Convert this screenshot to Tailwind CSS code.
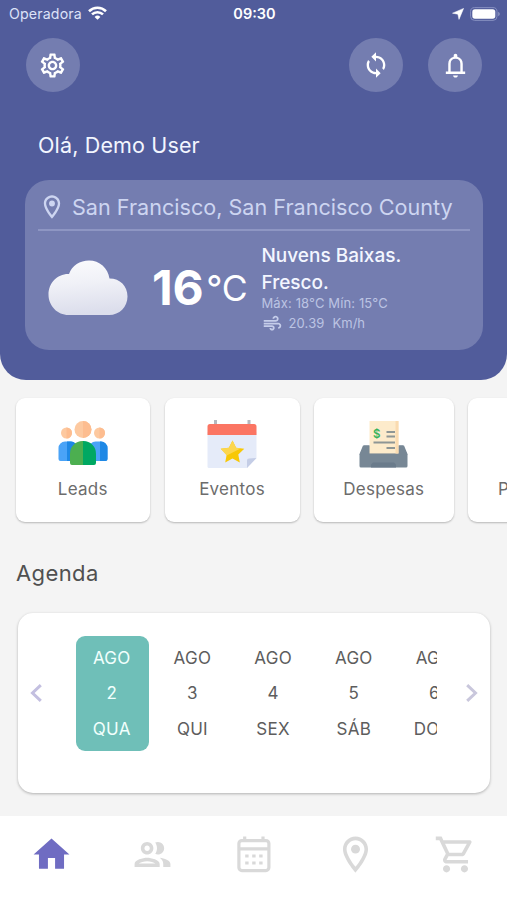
<!DOCTYPE html>
<html lang="pt">
<head>
<meta charset="utf-8">
<title>Agenda</title>
<script src="https://cdn.jsdelivr.net/npm/@tailwindcss/browser@4"></script>
</head>
<body class="w-[507px] h-[900px] overflow-hidden bg-[#f4f4f4] font-['Inter',sans-serif] flex flex-col">
<header class="h-[380px] shrink-0 bg-[#515c9b] rounded-b-[26px] flex flex-col text-white">
  <div class="h-[28px] grid grid-cols-3 items-center pl-[9px] pr-[7px]">
    <div class="flex items-center gap-[6px] text-[14.2px] leading-[28px] text-[#dde2f8]"><span class="tracking-[0.15px]">Operadora</span>
      <svg class="w-[19px] h-[14px] -mt-[2px]" viewBox="0 0 19 14" fill="none" stroke="#fff" stroke-width="2.6"><path d="M1 5.2a12.2 12.2 0 0 1 17 0M4 8.4a8 8 0 0 1 11 0"/><path d="M9.5 13.8 6.6 10.9a4.2 4.2 0 0 1 5.8 0z" fill="#fff" stroke="none"/></svg></div>
    <div class="text-center text-[14.5px] leading-[28px] font-semibold">09:30</div>
    <div class="flex items-center justify-end gap-[6px]">
      <svg class="w-[12px] h-[12px]" viewBox="0 0 12 12" fill="#fff"><path d="M11.6.4 7 11.4 5.9 6.2.5 5.2z" stroke="#fff" stroke-width=".5" stroke-linejoin="round"/></svg>
      <svg class="w-[30px] h-[14px]" viewBox="0 0 30 14"><rect x=".6" y=".6" width="26.4" height="12.8" rx="4" fill="none" stroke="#868fc0"/><rect x="2.3" y="2.3" width="23" height="9.4" rx="2.6" fill="#fff"/><path d="M28.4 4.8c1.6.8 1.6 3.600 0 4.400z" fill="#a0a7cd"/></svg>
    </div>
  </div>
  <div class="mt-[10px] h-[54px] pl-[25.500px] pr-[25px] flex items-center">
    <div class="size-[54px] rounded-full bg-[#747db0] flex items-center justify-center"><svg class="size-[29px]" viewBox="0 0 24 24" fill="#fff"><path d="M19.43 12.98c.04-.32.07-.64.07-.98 0-.34-.03-.66-.07-.98l2.11-1.65c.19-.15.24-.42.12-.64l-2-3.46c-.09-.16-.26-.25-.44-.25-.06 0-.12.01-.17.03l-2.49 1c-.52-.4-1.08-.73-1.69-.98l-.38-2.65C14.46 2.18 14.25 2 14 2h-4c-.25 0-.46.18-.49.42l-.38 2.65c-.61.25-1.17.59-1.69.98l-2.49-1c-.06-.02-.12-.03-.18-.03-.17 0-.34.09-.43.25l-2 3.46c-.13.22-.07.49.12.64l2.11 1.65c-.04.32-.07.65-.07.98 0 .33.03.66.07.98l-2.11 1.65c-.19.15-.24.42-.12.64l2 3.46c.09.16.26.25.44.25.06 0 .12-.01.17-.03l2.49-1c.52.4 1.08.73 1.69.98l.38 2.65c.03.24.24.42.49.42h4c.25 0 .46-.18.49-.42l.38-2.65c.61-.25 1.17-.59 1.69-.98l2.49 1c.06.02.12.03.18.03.17 0 .34-.09.43-.25l2-3.46c.12-.22.07-.49-.12-.64l-2.11-1.65zm-1.98-1.71c.04.31.05.52.05.73 0 .21-.02.43-.05.73l-.14 1.13.89.7 1.08.84-.7 1.21-1.27-.51-1.04-.42-.9.68c-.43.32-.84.56-1.25.73l-1.06.43-.16 1.13-.2 1.35h-1.4l-.19-1.35-.16-1.13-1.06-.43c-.43-.18-.83-.41-1.23-.71l-.91-.7-1.06.43-1.27.51-.7-1.21 1.08-.84.89-.7-.14-1.13c-.03-.31-.05-.54-.05-.74s.02-.43.05-.73l.14-1.13-.89-.7-1.08-.84.7-1.21 1.27.51 1.04.42.9-.68c.43-.32.84-.56 1.25-.73l1.06-.43.16-1.13.2-1.35h1.39l.19 1.35.16 1.13 1.06.43c.43.18.83.41 1.23.71l.91.7 1.06-.43 1.27-.51.7 1.21-1.07.85-.89.7.14 1.13zM12 8c-2.21 0-4 1.79-4 4s1.79 4 4 4 4-1.79 4-4-1.79-4-4-4zm0 6c-1.1 0-2-.9-2-2s.9-2 2-2 2 .9 2 2-.9 2-2 2z"/></svg></div>
    <div class="ml-auto size-[54px] rounded-full bg-[#747db0] flex items-center justify-center"><svg class="size-[28px]" viewBox="0 0 24 24" fill="#fff"><path d="M12 4V1L8 5l4 4V6c3.31 0 6 2.69 6 6 0 1.01-.25 1.97-.7 2.8l1.46 1.46C19.54 15.03 20 13.57 20 12c0-4.42-3.58-8-8-8zm0 14c-3.31 0-6-2.69-6-6 0-1.01.25-1.97.7-2.8L5.24 7.74C4.46 8.97 4 10.43 4 12c0 4.42 3.58 8 8 8v3l4-4-4-4v3z"/></svg></div>
    <div class="ml-[25px] size-[54px] rounded-full bg-[#747db0] flex items-center justify-center"><svg class="size-[29px]" viewBox="0 0 24 24" fill="#fff"><path d="M12 22c1.1 0 2-.7 2-1.700h-4c0 1 .9 1.700 2 1.700zM18 17v-6.500c0-3.070-1.630-5.140-4.500-5.820V3.800c0-.83-.67-1.500-1.500-1.500s-1.500.67-1.500 1.500v.88C7.640 5.360 6 7.420 6 10.500V17H4v2h16v-2zM16 17H8v-6.500c0-2.480 1.510-4 4-4s4 1.520 4 4z"/></svg></div>
  </div>
  <div class="mt-[38px] h-[30px] pl-[38px] text-[21.5px] leading-[30px] tracking-[0.15px] text-[#f3f6ff] whitespace-nowrap">Olá, Demo User</div>
  <section class="mt-[20px] ml-[25px] w-[457.500px] h-[170px] rounded-[24px] bg-[#747db0] px-[12.500px] flex flex-col">
    <div class="h-[51px] border-b-2 border-[#8e96c3] flex items-center pt-[5px] text-[#cdd5f1]">
      <svg class="size-[28px] -mt-[1px]" viewBox="0 0 24 24" fill="#cdd5f1"><path d="M12 2C8.13 2 5 5.13 5 9c0 5.25 7 13 7 13s7-7.75 7-13c0-3.87-3.13-7-7-7zM7 9c0-2.76 2.24-5 5-5s5 2.24 5 5c0 2.880-2.880 7.190-5 9.880C9.920 16.210 7 11.850 7 9z"/><circle cx="12" cy="9" r="2.500"/></svg>
      <span class="ml-[6.500px] text-[21.6px] leading-[30px] whitespace-nowrap">San Francisco, San Francisco County</span>
    </div>
    <div class="h-[119px] flex">
      <svg class="w-[80px] h-[56px] mt-[28.500px] ml-[10px] shrink-0" viewBox="0 0 80 56"><defs><linearGradient id="cl" x1="0" y1="0" x2="0.12" y2="1"><stop offset="0" stop-color="#fbfbfd"/><stop offset=".45" stop-color="#f0f1f7"/><stop offset="1" stop-color="#dcdeec"/></linearGradient></defs><path d="M20.500 55C9.500 55 .500 46 .500 34.500 .500 23 9.500 13.500 21 14 24 5.500 32 .500 41 .500 51.500 .500 60 8 61.500 18.500 72 18.500 79.500 26 79.500 36.500 79.500 47 71.500 55 61 55z" fill="url(#cl)"/></svg>
      <div class="ml-[24.500px] mt-[27px] w-[109.500px] h-[60px] flex items-baseline leading-[60px] whitespace-nowrap"><span class="text-[48px] font-bold tracking-[-0.3px]">16</span><span class="text-[35.500px] relative -top-[4px] ml-[3px] tracking-[-0.300px]">°C</span></div>
      <div class="mt-[11px] flex flex-col text-[#c5cdea] whitespace-nowrap">
        <div class="text-[19px] leading-[27px] font-medium text-[#f3f6ff]">Nuvens Baixas.<br>Fresco.</div>
        <div class="-mt-[1px] text-[13px] leading-[16px] tracking-[0.120px] text-[#bcc4e3]">Máx: 18°C Mín: 15°C</div>
        <div class="mt-[2px] h-[21px] flex items-center text-[13px] text-[#bcc4e3]"><svg class="size-[21px]" viewBox="0 0 24 24" fill="#c5cdea"><path d="M14.5 17c0 1.65-1.35 3-3 3s-3-1.35-3-3h2c0 .55.45 1 1 1s1-.45 1-1-.45-1-1-1H2v-2h9.500c1.650 0 3 1.350 3 3zM19 6.500C19 4.570 17.430 3 15.500 3S12 4.570 12 6.500h2c0-.83.67-1.500 1.500-1.500s1.500.67 1.500 1.500S16.330 8 15.500 8H2v2h13.500c1.930 0 3.500-1.570 3.500-3.500zm-.5 4.500H2v2h16.500c.83 0 1.500.67 1.500 1.500s-.67 1.500-1.500 1.500v2c1.930 0 3.500-1.570 3.500-3.500S20.430 11 18.500 11z"/></svg><span class="ml-[6px] tracking-[0.150px]">20.39</span><span class="ml-[8px]">Km/h</span></div>
      </div>
    </div>
  </section>
</header>
<nav class="w-[507px] h-[134px] overflow-hidden mt-[12px] pt-[6px] pl-[15.500px] flex shrink-0 gap-[14.500px] text-[17px] leading-[24px] tracking-[0.250px] text-[#6c6c6c]">
  <a class="w-[134.500px] h-[124px] shrink-0 rounded-[9px] bg-white shadow-[0_1px_2px_rgba(0,0,0,0.25)] flex flex-col items-center">
    <svg class="mt-[23px] w-[50px] h-[46px]" viewBox="0 0 50 46"><circle cx="8.500" cy="12" r="5.500" fill="#fdc9a0"/><circle cx="41.500" cy="12" r="5.500" fill="#fdc9a0"/><path d="M8.500 6.500a5.500 5.500 0 0 1 0 11zM41.500 6.500a5.500 5.500 0 0 1 0 11z" fill="#fdbd90"/><path d="M.500 27a6.500 6.500 0 0 1 6.500-6.500h6A6 6 0 0 1 19 27v13H2.500a2 2 0 0 1-2-2z" fill="#4aa3f7"/><path d="M9 20.500h4A6 6 0 0 1 19 27v13H9z" fill="#1e88e5"/><path d="M31 27a6.500 6.500 0 0 1 6.500-6.500H43a6.500 6.500 0 0 1 6.500 6.500v11a2 2 0 0 1-2 2H31z" fill="#4aa3f7"/><path d="M42 20.500h1a6.500 6.500 0 0 1 6.500 6.500v11a2 2 0 0 1-2 2H42z" fill="#1e88e5"/><circle cx="25" cy="8.500" r="8.500" fill="#fdc9a0"/><path d="M25 0a8.500 8.500 0 0 1 0 17z" fill="#fdbd90"/><path d="M12 33a12.500 12.500 0 0 1 13-13v24H14a2 2 0 0 1-2-2z" fill="#4caf50"/><path d="M25 20a12.500 12.500 0 0 1 13 13v9a2 2 0 0 1-2 2H25z" fill="#00a862"/></svg>
    <span class="mt-[10px]">Leads</span></a>
  <a class="w-[135px] h-[124px] shrink-0 rounded-[9px] bg-white shadow-[0_1px_2px_rgba(0,0,0,0.25)] flex flex-col items-center">
    <svg class="mt-[22px] w-[50px] h-[48px]" viewBox="0 0 50 48"><path d="M8.500 0v8M42 0v8" stroke="#b5b8bf" stroke-width="3"/><path d="M.500 12h49v26L40 48H2a1.500 1.500 0 0 1-1.500-1.500z" fill="#e5ebf9"/><path d="M.500 15V6.500A2.500 2.500 0 0 1 3 4h44a2.500 2.500 0 0 1 2.500 2.500V15z" fill="#fb7563"/><path d="M49.500 38 40 48v-7.500a2 2 0 0 1 2-2z" fill="#c4cde6"/><path d="m25.500 20.500 3.600 7.300 8.200 1-6 5.600 1.500 8.100-7.300-4-7.300 4 1.500-8.100-6-5.600 8.200-1z" fill="#f8c805"/><path d="m25.500 20.500 3.600 7.300 4.400.600-13.800 7L13.700 28.800l8.200-1z" fill="#fcd64e"/></svg>
    <span class="mt-[9px]">Eventos</span></a>
  <a class="w-[139.500px] h-[124px] shrink-0 rounded-[9px] bg-white shadow-[0_1px_2px_rgba(0,0,0,0.25)] flex flex-col items-center">
    <svg class="mt-[22px] w-[49px] h-[48px]" viewBox="0 0 49 48"><path d="M5 25.500h39L48.500 35H.500z" fill="#66798a"/><path d="M.500 34 4 25.500h6.500V34h29v-8.500H45L48.500 34v12a1.500 1.500 0 0 1-1.500 1.500H2A1.500 1.500 0 0 1 .500 46z" fill="#778795"/><path d="M12 47.500v-3l2-2h21l2 2v3z" fill="#6a7b8b"/><path d="M10.500 1h29v32.500h-29z" fill="#fdebcb"/><path d="M36.500 1h3v32.500h-3z" fill="#fadbb0"/><path d="M27.500 12H36M27.500 16.500H36M14.500 22.500H36M27.500 28H36" stroke="#8e9695" stroke-width="1.800"/><text x="14" y="17.500" font-family="Inter" font-size="11.500" font-weight="600" fill="#35b35c" letter-spacing="0">$</text></svg>
    <span class="mt-[9px]">Despesas</span></a>
  <a class="w-[134.500px] h-[124px] shrink-0 rounded-[9px] bg-white shadow-[0_1px_2px_rgba(0,0,0,0.25)] pl-[30px] pt-[79px]">P</a>
</nav>
<h2 class="mt-[32px] ml-[16px] shrink-0 text-[22px] leading-[30px] tracking-[0.400px] text-[#505050]">Agenda</h2>
<section class="mt-[25px] ml-[18px] w-[472px] h-[180px] shrink-0 rounded-[15px] bg-white shadow-[0_1px_3px_rgba(0,0,0,0.28)] flex pt-[23px]">
  <svg class="mt-[48px] ml-[12px] w-[12px] h-[18px] shrink-0" viewBox="0 0 12 18" fill="none" stroke="#c3bfe0" stroke-width="3"><path d="M10.800 1.200 2.500 9l8.300 7.800"/></svg>
  <div class="ml-[33.500px] w-[361px] h-[115px] shrink-0 overflow-hidden flex gap-[7.200px] text-[17px] leading-[35.500px] text-center tracking-[0.300px] text-[#5d5d5d]">
    <div class="w-[73.500px] h-[114.500px] shrink-0 rounded-[9px] bg-[#6fbfb8] text-[#f2fffd] pt-[4.500px] pr-[1px]">AGO<br>2<br>QUA</div>
    <div class="w-[73.500px] shrink-0 pt-[4.500px] pr-[1px]">AGO<br>3<br>QUI</div>
    <div class="w-[73.500px] shrink-0 pt-[4.500px] pr-[1px]">AGO<br>4<br>SEX</div>
    <div class="w-[73.500px] shrink-0 pt-[4.500px] pr-[1px]">AGO<br>5<br>SÁB</div>
    <div class="w-[73.500px] shrink-0 pt-[4.500px] pr-[1px]">AGO<br>6<br>DOM</div>
  </div>
  <svg class="mt-[48px] ml-[29px] w-[12px] h-[18px] shrink-0" viewBox="0 0 12 18" fill="none" stroke="#c9c7dc" stroke-width="3"><path d="m1.200 1.200 8.300 7.800-8.300 7.800"/></svg>
</section>
<footer class="mt-auto h-[84px] shrink-0 bg-white grid grid-cols-5 justify-items-center pt-[16.500px]">
  <svg class="size-[43px] ml-[2px]" viewBox="0 0 24 24" fill="#6f6cc2"><path d="M10 20v-6h4v6h5v-8h3L12 3 2 12h3v8z"/></svg>
  <svg class="size-[43px] ml-[1px]" viewBox="0 0 24 24" fill="#d9d9d9"><path d="M9 13.750c-2.340 0-7 1.170-7 3.500V19h14v-1.750c0-2.330-4.660-3.500-7-3.500zM4.340 17c.84-.58 2.870-1.250 4.660-1.250s3.820.67 4.660 1.250H4.340zM9 12c1.930 0 3.500-1.570 3.500-3.500S10.930 5 9 5 5.500 6.570 5.500 8.500 7.070 12 9 12zm0-5c.83 0 1.500.67 1.500 1.500S9.830 10 9 10s-1.500-.67-1.500-1.500S8.170 7 9 7zm7.040 6.810c1.160.84 1.960 1.960 1.960 3.440V19h4v-1.750c0-2.020-3.500-3.170-5.960-3.440zM15 12c1.930 0 3.500-1.570 3.500-3.500S16.930 5 15 5c-.54 0-1.040.13-1.500.35.63.89 1 1.980 1 3.150s-.37 2.260-1 3.150c.46.22.96.35 1.500.35z"/></svg>
  <svg class="size-[43px]" viewBox="0 0 43 43" fill="none" stroke="#d9d9d9" stroke-width="3.200"><rect x="6.900" y="7.600" width="30" height="30" rx="3"/><path d="M6.900 15.800h30M12.700 3.500v4M31 3.500v4"/><path d="M13.200 23h3.400M20.200 23h3.400M27.200 23h3.400M13.200 30h3.400M20.200 30h3.400M27.200 30h3.400"/></svg>
  <svg class="size-[43px] ml-[1px]" viewBox="0 0 24 24" fill="#d9d9d9"><path d="M12 2C8.130 2 5 5.130 5 9c0 5.250 7 13 7 13s7-7.750 7-13c0-3.870-3.130-7-7-7zM7 9c0-2.760 2.240-5 5-5s5 2.240 5 5c0 2.880-2.880 7.190-5 9.880C9.920 16.210 7 11.850 7 9z"/><circle cx="12" cy="9" r="2.500"/></svg>
  <svg class="size-[43px] -ml-[1px]" viewBox="0 0 24 24" fill="#d9d9d9"><path d="M15.550 13c.75 0 1.410-.41 1.750-1.030l3.580-6.490c.37-.66-.11-1.480-.87-1.480H5.210l-.94-2H1v2h2l3.600 7.590-1.350 2.440C4.520 15.370 5.480 17 7 17h12v-2H7l1.100-2h7.450zM6.160 6h12.150l-2.760 5H8.530L6.160 6zM7 18c-1.100 0-1.990.9-1.990 2S5.900 22 7 22s2-.9 2-2-.9-2-2-2zm10 0c-1.100 0-1.990.9-1.990 2s.89 2 1.990 2 2-.9 2-2-.9-2-2-2z"/></svg>
</footer>
</body>
</html>
